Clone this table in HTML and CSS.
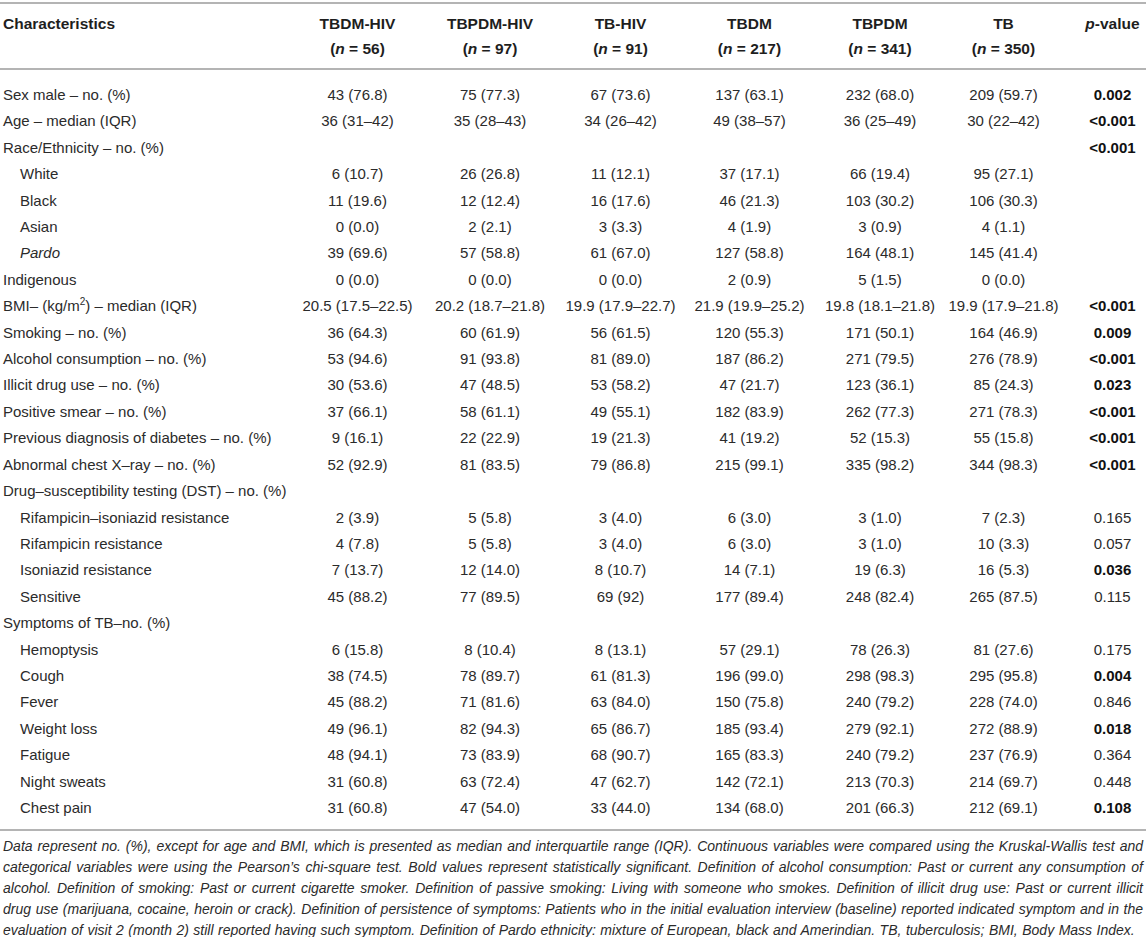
FILE: index.html
```html
<!DOCTYPE html>
<html>
<head>
<meta charset="utf-8">
<link rel="stylesheet" href="styles.css">
</head>
<body>
<div class="page">
<table class="data">
<colgroup>
<col class="c-label"><col class="c1"><col class="c2"><col class="c3"><col class="c4"><col class="c5"><col class="c6"><col class="c7">
</colgroup>
<thead>
<tr>
<th class="lab">Characteristics</th>
<th>TBDM-HIV<br>(<i>n</i> = 56)</th>
<th>TBPDM-HIV<br>(<i>n</i> = 97)</th>
<th>TB-HIV<br>(<i>n</i> = 91)</th>
<th>TBDM<br>(<i>n</i> = 217)</th>
<th>TBPDM<br>(<i>n</i> = 341)</th>
<th>TB<br>(<i>n</i> = 350)</th>
<th class="pv"><i>p</i>-value</th>
</tr>
</thead>
<tbody>
<tr class="first"><td class="lab">Sex male – no. (%)</td><td>43 (76.8)</td><td>75 (77.3)</td><td>67 (73.6)</td><td>137 (63.1)</td><td>232 (68.0)</td><td>209 (59.7)</td><td class="pv b">0.002</td></tr>
<tr><td class="lab">Age – median (IQR)</td><td>36 (31–42)</td><td>35 (28–43)</td><td>34 (26–42)</td><td>49 (38–57)</td><td>36 (25–49)</td><td>30 (22–42)</td><td class="pv b">&lt;0.001</td></tr>
<tr><td class="lab">Race/Ethnicity – no. (%)</td><td></td><td></td><td></td><td></td><td></td><td></td><td class="pv b">&lt;0.001</td></tr>
<tr><td class="lab sub">White</td><td>6 (10.7)</td><td>26 (26.8)</td><td>11 (12.1)</td><td>37 (17.1)</td><td>66 (19.4)</td><td>95 (27.1)</td><td class="pv"></td></tr>
<tr><td class="lab sub">Black</td><td>11 (19.6)</td><td>12 (12.4)</td><td>16 (17.6)</td><td>46 (21.3)</td><td>103 (30.2)</td><td>106 (30.3)</td><td class="pv"></td></tr>
<tr><td class="lab sub">Asian</td><td>0 (0.0)</td><td>2 (2.1)</td><td>3 (3.3)</td><td>4 (1.9)</td><td>3 (0.9)</td><td>4 (1.1)</td><td class="pv"></td></tr>
<tr><td class="lab sub"><i>Pardo</i></td><td>39 (69.6)</td><td>57 (58.8)</td><td>61 (67.0)</td><td>127 (58.8)</td><td>164 (48.1)</td><td>145 (41.4)</td><td class="pv"></td></tr>
<tr><td class="lab">Indigenous</td><td>0 (0.0)</td><td>0 (0.0)</td><td>0 (0.0)</td><td>2 (0.9)</td><td>5 (1.5)</td><td>0 (0.0)</td><td class="pv"></td></tr>
<tr><td class="lab">BMI– (kg/m<sup>2</sup>) – median (IQR)</td><td>20.5 (17.5–22.5)</td><td>20.2 (18.7–21.8)</td><td>19.9 (17.9–22.7)</td><td>21.9 (19.9–25.2)</td><td>19.8 (18.1–21.8)</td><td>19.9 (17.9–21.8)</td><td class="pv b">&lt;0.001</td></tr>
<tr><td class="lab">Smoking – no. (%)</td><td>36 (64.3)</td><td>60 (61.9)</td><td>56 (61.5)</td><td>120 (55.3)</td><td>171 (50.1)</td><td>164 (46.9)</td><td class="pv b">0.009</td></tr>
<tr><td class="lab">Alcohol consumption – no. (%)</td><td>53 (94.6)</td><td>91 (93.8)</td><td>81 (89.0)</td><td>187 (86.2)</td><td>271 (79.5)</td><td>276 (78.9)</td><td class="pv b">&lt;0.001</td></tr>
<tr><td class="lab">Illicit drug use – no. (%)</td><td>30 (53.6)</td><td>47 (48.5)</td><td>53 (58.2)</td><td>47 (21.7)</td><td>123 (36.1)</td><td>85 (24.3)</td><td class="pv b">0.023</td></tr>
<tr><td class="lab">Positive smear – no. (%)</td><td>37 (66.1)</td><td>58 (61.1)</td><td>49 (55.1)</td><td>182 (83.9)</td><td>262 (77.3)</td><td>271 (78.3)</td><td class="pv b">&lt;0.001</td></tr>
<tr><td class="lab">Previous diagnosis of diabetes – no. (%)</td><td>9 (16.1)</td><td>22 (22.9)</td><td>19 (21.3)</td><td>41 (19.2)</td><td>52 (15.3)</td><td>55 (15.8)</td><td class="pv b">&lt;0.001</td></tr>
<tr><td class="lab">Abnormal chest X–ray – no. (%)</td><td>52 (92.9)</td><td>81 (83.5)</td><td>79 (86.8)</td><td>215 (99.1)</td><td>335 (98.2)</td><td>344 (98.3)</td><td class="pv b">&lt;0.001</td></tr>
<tr><td class="lab">Drug–susceptibility testing (DST) – no. (%)</td><td></td><td></td><td></td><td></td><td></td><td></td><td class="pv"></td></tr>
<tr><td class="lab sub">Rifampicin–isoniazid resistance</td><td>2 (3.9)</td><td>5 (5.8)</td><td>3 (4.0)</td><td>6 (3.0)</td><td>3 (1.0)</td><td>7 (2.3)</td><td class="pv">0.165</td></tr>
<tr><td class="lab sub">Rifampicin resistance</td><td>4 (7.8)</td><td>5 (5.8)</td><td>3 (4.0)</td><td>6 (3.0)</td><td>3 (1.0)</td><td>10 (3.3)</td><td class="pv">0.057</td></tr>
<tr><td class="lab sub">Isoniazid resistance</td><td>7 (13.7)</td><td>12 (14.0)</td><td>8 (10.7)</td><td>14 (7.1)</td><td>19 (6.3)</td><td>16 (5.3)</td><td class="pv b">0.036</td></tr>
<tr><td class="lab sub">Sensitive</td><td>45 (88.2)</td><td>77 (89.5)</td><td>69 (92)</td><td>177 (89.4)</td><td>248 (82.4)</td><td>265 (87.5)</td><td class="pv">0.115</td></tr>
<tr><td class="lab">Symptoms of TB–no. (%)</td><td></td><td></td><td></td><td></td><td></td><td></td><td class="pv"></td></tr>
<tr><td class="lab sub">Hemoptysis</td><td>6 (15.8)</td><td>8 (10.4)</td><td>8 (13.1)</td><td>57 (29.1)</td><td>78 (26.3)</td><td>81 (27.6)</td><td class="pv">0.175</td></tr>
<tr><td class="lab sub">Cough</td><td>38 (74.5)</td><td>78 (89.7)</td><td>61 (81.3)</td><td>196 (99.0)</td><td>298 (98.3)</td><td>295 (95.8)</td><td class="pv b">0.004</td></tr>
<tr><td class="lab sub">Fever</td><td>45 (88.2)</td><td>71 (81.6)</td><td>63 (84.0)</td><td>150 (75.8)</td><td>240 (79.2)</td><td>228 (74.0)</td><td class="pv">0.846</td></tr>
<tr><td class="lab sub">Weight loss</td><td>49 (96.1)</td><td>82 (94.3)</td><td>65 (86.7)</td><td>185 (93.4)</td><td>279 (92.1)</td><td>272 (88.9)</td><td class="pv b">0.018</td></tr>
<tr><td class="lab sub">Fatigue</td><td>48 (94.1)</td><td>73 (83.9)</td><td>68 (90.7)</td><td>165 (83.3)</td><td>240 (79.2)</td><td>237 (76.9)</td><td class="pv">0.364</td></tr>
<tr><td class="lab sub">Night sweats</td><td>31 (60.8)</td><td>63 (72.4)</td><td>47 (62.7)</td><td>142 (72.1)</td><td>213 (70.3)</td><td>214 (69.7)</td><td class="pv">0.448</td></tr>
<tr class="last"><td class="lab sub">Chest pain</td><td>31 (60.8)</td><td>47 (54.0)</td><td>33 (44.0)</td><td>134 (68.0)</td><td>201 (66.3)</td><td>212 (69.1)</td><td class="pv b">0.108</td></tr>
</tbody>
</table>
<p class="note">Data represent no. (%), except for age and BMI, which is presented as median and interquartile range (IQR). Continuous variables were compared using the Kruskal-Wallis test and categorical variables were using the Pearson’s chi-square test. Bold values represent statistically significant. Definition of alcohol consumption: Past or current any consumption of alcohol. Definition of smoking: Past or current cigarette smoker. Definition of passive smoking: Living with someone who smokes. Definition of illicit drug use: Past or current illicit drug use (marijuana, cocaine, heroin or crack). Definition of persistence of symptoms: Patients who in the initial evaluation interview (baseline) reported indicated symptom and in the evaluation of visit 2 (month 2) still reported having such symptom. Definition of Pardo ethnicity: mixture of European, black and Amerindian. TB, tuberculosis; BMI, Body Mass Index.</p>
</div>
</body>
</html>
```

FILE: styles.css
```css
html, body {
  margin: 0;
  padding: 0;
  background: #ffffff;
}
.page {
  width: 1146px;
  padding-top: 2px;
  font-family: "Liberation Sans", Arial, sans-serif;
  color: #2b2b2b;
}
.data {
  width: 1146px;
  border-collapse: collapse;
  table-layout: fixed;
  font-size: 15px;
}
.c-label { width: 292px; }
.c1 { width: 131px; }
.c2 { width: 134px; }
.c3 { width: 127px; }
.c4 { width: 131px; }
.c5 { width: 130px; }
.c6 { width: 117px; }
.c7 { width: 84px; }
.data thead tr {
  border-top: 2px solid #b4b4b4;
  border-bottom: 2px solid #b4b4b4;
}
.data th {
  font-size: 15.5px;
  font-weight: bold;
  color: #1e1e1e;
  line-height: 25px;
  padding: 7px 0 7px 0;
  text-align: center;
  vertical-align: top;
}
.data td {
  line-height: 26.4px;
  padding: 0;
  text-align: center;
  white-space: nowrap;
}
.data .lab {
  text-align: left;
  padding-left: 3px;
}
.data .sub {
  padding-left: 20px;
}
.data .pv {
  padding-left: 20px;
  padding-right: 3px;
}
.data .b {
  font-weight: bold;
  color: #111;
}
.data tr.first td {
  padding-top: 12px;
}
.data tr.last td {
  padding-bottom: 8px;
}
.data tbody tr.last {
  border-bottom: 2px solid #b4b4b4;
}
sup {
  font-size: 10px;
  line-height: 0;
  vertical-align: 6px;
}
.note {
  margin: 5px 0 0 0;
  padding: 0 3px;
  font-size: 14px;
  line-height: 21px;
  word-spacing: 0.6px;
  font-style: italic;
  text-align: justify;
  color: #2b2b2b;
}
```
